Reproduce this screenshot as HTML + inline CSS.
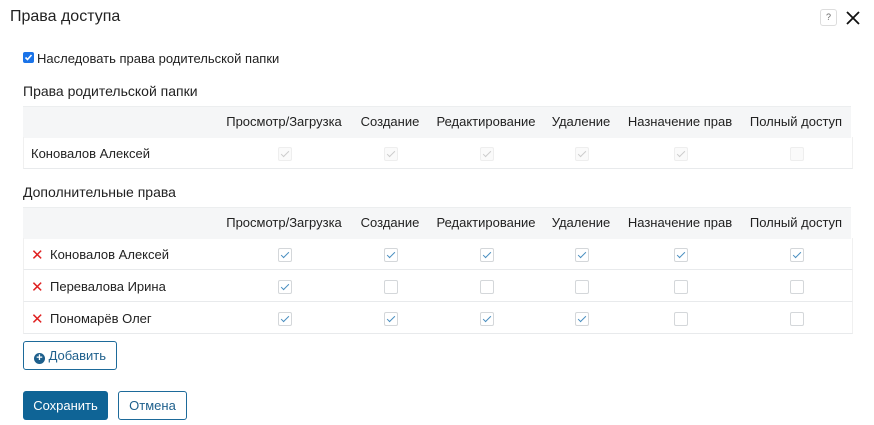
<!DOCTYPE html><html><head><meta charset="utf-8"><style>
body{margin:0;width:874px;height:425px;background:#fff;font-family:"Liberation Sans",sans-serif;color:#222;position:relative;overflow:hidden;font-size:13px}
.a{position:absolute;white-space:nowrap}
.hd{position:absolute;left:23px;width:828px;height:31px;background:#f5f6f7;border-top:1px solid #eceeef}
.row{position:absolute;left:23px;width:828px;height:31px;border-bottom:1px solid #e8eaec;border-left:1px solid #f0f0f0;border-right:1px solid #f0f0f0}
.cb{position:absolute;width:12px;height:12px;border:1px solid #d4d7da;border-radius:2px;background:#fff}
.cb.c::after{content:"";position:absolute;left:4px;top:1px;width:3px;height:7px;border:solid #4a8fc0;border-width:0 1px 1px 0;transform:rotate(45deg)}
.cb.d{border-color:#eee;background:#fafafa}
.cb.d.c::after{border-color:#ccc}
.x{color:#e02020;font-size:15px}
</style></head><body>
<div class="a" style="left:10px;top:8px;font-size:16px">Права доступа</div>
<div class="a" style="left:820px;top:9px;width:15px;height:15px;border:1px solid #ddd;border-radius:3px;font-size:9px;text-align:center;line-height:15px;color:#666">?</div>
<svg class="a" style="left:846px;top:11px" width="14" height="14"><path d="M1 1L13 13M13 1L1 13" stroke="#111" stroke-width="1.8"/></svg>
<div class="a" style="left:23px;top:52px;width:11px;height:11px;background:#1a73e8;border-radius:2px"><svg width="11" height="11" style="display:block"><path d="M2.5 5.5l2 2 4-4.5" stroke="#fff" stroke-width="1.6" fill="none"/></svg></div>
<div class="a" style="left:37px;top:51px">Наследовать права родительской папки</div>
<div class="a" style="left:23px;top:83px;font-size:14px">Права родительской папки</div>
<div class="hd" style="top:106px"></div>
<div class="row" style="top:137px"></div>
<div class="a" style="left:31px;top:146px">Коновалов Алексей</div>
<div class="a" style="left:23px;top:184px;font-size:14px">Дополнительные права</div>
<div class="hd" style="top:207px"></div>
<div class="row" style="top:238px"></div><div class="row" style="top:270px"></div><div class="row" style="top:302px"></div>
<div class="a x" style="left:31px;top:246px">✕</div><div class="a" style="left:50px;top:247px">Коновалов Алексей</div>
<div class="a x" style="left:31px;top:278px">✕</div><div class="a" style="left:50px;top:279px">Перевалова Ирина</div>
<div class="a x" style="left:31px;top:310px">✕</div><div class="a" style="left:50px;top:311px">Пономарёв Олег</div>
<div id="h"></div>
<div class="a" style="left:23px;top:341px;width:92px;height:27px;border:1px solid #1d6a9a;border-radius:3px;color:#1d5f8c;line-height:27px;text-align:center"><span style="display:inline-block;width:11px;height:11px;border-radius:50%;background:#1d5f8c;color:#fff;font-size:11px;line-height:11px;vertical-align:-1px;font-weight:bold">+</span> Добавить</div>
<div class="a" style="left:23px;top:391px;width:85px;height:29px;background:#0f6496;border-radius:3px;color:#fff;line-height:29px;text-align:center">Сохранить</div>
<div class="a" style="left:118px;top:391px;width:67px;height:27px;border:1px solid #1d6a9a;border-radius:3px;color:#1d5f8c;line-height:27px;text-align:center">Отмена</div>
<script>
var cols=[284,390,486,581,680,796],names=["Просмотр/Загрузка","Создание","Редактирование","Удаление","Назначение прав","Полный доступ"];
var h="";
[114,215].forEach(function(t){names.forEach(function(n,i){h+='<div class="a" style="left:'+(cols[i]-60)+'px;width:120px;text-align:center;top:'+t+'px">'+n+'</div>'})});
var d=[1,1,1,1,1,0];cols.forEach(function(c,i){h+='<div class="cb d'+(d[i]?' c':'')+'" style="left:'+(c-6)+'px;top:147px"></div>'});
var rs=[[1,1,1,1,1,1],[1,0,0,0,0,0],[1,1,1,1,0,0]],ys=[248,280,312];
rs.forEach(function(r,j){cols.forEach(function(c,i){h+='<div class="cb'+(r[i]?' c':'')+'" style="left:'+(c-6)+'px;top:'+ys[j]+'px"></div>'})});
document.getElementById("h").innerHTML=h;
</script>
</body></html>
